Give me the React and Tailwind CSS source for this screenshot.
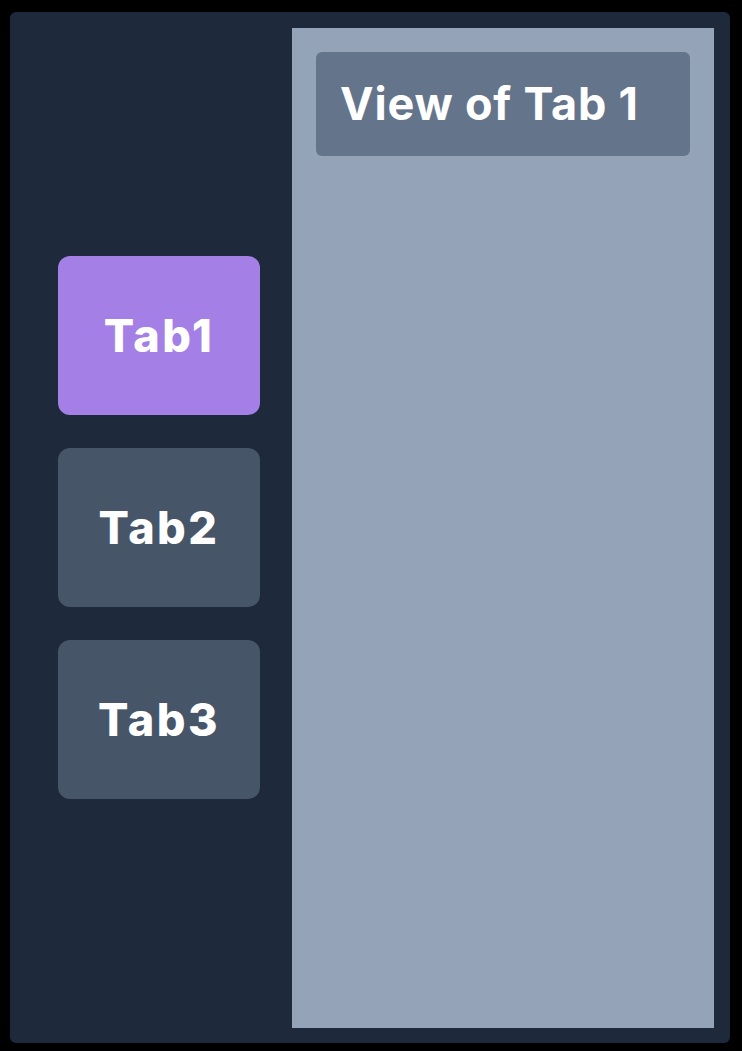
export default function App() {
  const tabs = ["Tab1", "Tab2", "Tab3"];
  return (
    <div className="w-[742px] h-[1051px] bg-black pt-[12px] pl-[10px]" style={{ fontFamily: "Inter, 'Noto Sans', sans-serif" }}>
      <div className="w-[720px] h-[1031px] bg-[#1e293b] rounded-[6px] flex pt-[16px] pb-[15px] pr-[16px]">
        <div className="w-[282px] shrink-0 flex flex-col justify-center gap-[33px] pl-[48px] pb-[1px]">
          {tabs.map((t, i) => (
            <div
              key={t}
              className={`w-[202px] h-[159px] rounded-[12px] flex items-center justify-center text-white font-extrabold text-[45px] tracking-[2.5px] ${i === 0 ? "bg-[#a37fe6]" : "bg-[#475569]"}`}
            >
              {t}
            </div>
          ))}
        </div>
        <div className="flex-1 bg-[#94a3b8] p-[24px]">
          <div className="h-[104px] bg-[#64748b] rounded-[6px] flex items-center pl-[24px] text-white font-bold text-[45px] tracking-[0.8px]">
            View of Tab 1
          </div>
        </div>
      </div>
    </div>
  );
}
